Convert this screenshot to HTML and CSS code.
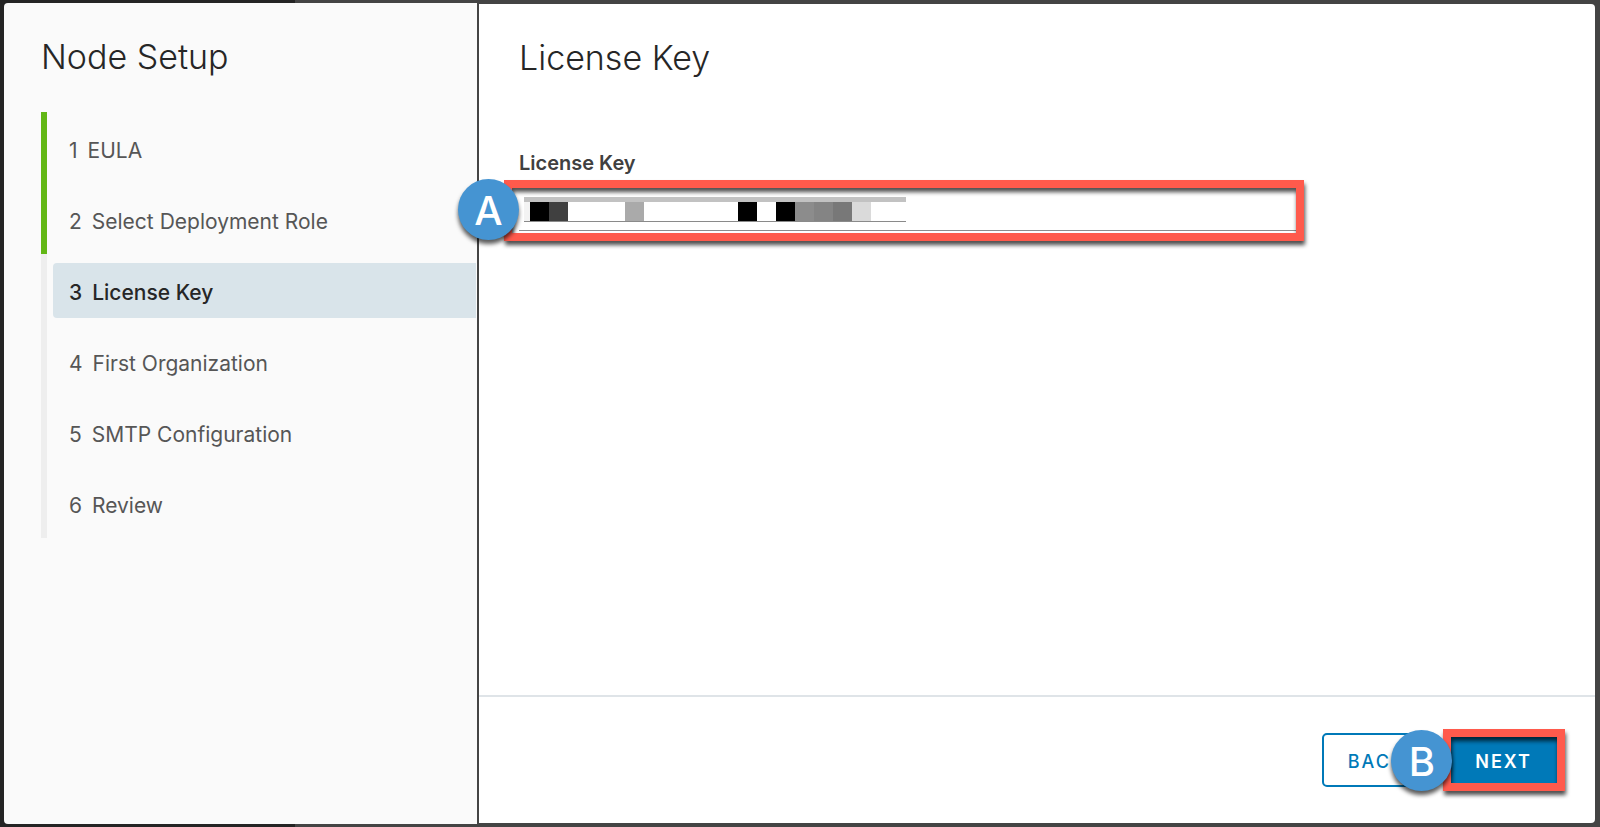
FILE: index.html
```html
<!DOCTYPE html>
<html lang="en">
<head>
  <meta charset="UTF-8" />
  <meta name="viewport" content="width=device-width, initial-scale=1.0"/>
  <title>Node Setup</title>
  <link rel="stylesheet" href="styles.css">
</head>
<body>
  <div class="wizard">
    <aside class="sidebar">
      <h1>Node Setup</h1>
      <ol class="steps">
        <li class="done"><a href="#eula"><span>1</span><span>EULA</span></a></li>
        <li class="done"><a href="#role"><span>2</span><span>Select Deployment Role</span></a></li>
        <li class="current"><a href="#license" aria-current="step"><span>3</span><span>License Key</span></a></li>
        <li><a href="#organization"><span>4</span><span>First Organization</span></a></li>
        <li><a href="#smtp"><span>5</span><span>SMTP Configuration</span></a></li>
        <li><a href="#review"><span>6</span><span>Review</span></a></li>
      </ol>
    </aside>

    <main class="page">
      <div class="page-body">
        <h2>License Key</h2>
        <form class="field">
          <label for="license-key">License Key</label>
          <div class="input-wrap">
            <input type="text" id="license-key" autocomplete="off">
            <!-- masked key value -->
            <svg class="mask" width="382" height="25" viewBox="0 0 382 25" shape-rendering="crispEdges" aria-hidden="true">
              <rect width="382" height="5" fill="#c2c2c2"/>
              <rect y="5" width="6" height="19" fill="#f3f3f3"/>
              <rect x="6" y="5" width="19" height="19" fill="#000"/>
              <rect x="25" y="5" width="19" height="19" fill="#404040"/>
              <rect x="101" y="5" width="19" height="19" fill="#aaa"/>
              <rect x="214" y="5" width="19" height="19" fill="#000"/>
              <rect x="252" y="5" width="19" height="19" fill="#000"/>
              <rect x="271" y="5" width="19" height="19" fill="#8c8c8c"/>
              <rect x="290" y="5" width="19" height="19" fill="#848484"/>
              <rect x="309" y="5" width="19" height="19" fill="#787878"/>
              <rect x="328" y="5" width="19" height="19" fill="#dadada"/>
              <rect y="24" width="382" height="1" fill="#8a8a8a"/>
            </svg>
            <span class="callout callout-input"></span>
            <span class="badge badge-a">A</span>
          </div>
        </form>
      </div>

      <footer class="actions">
        <button type="button" class="btn">BACK</button>
        <div class="next-wrap">
          <button type="button" class="btn btn-primary">NEXT</button>
          <span class="callout callout-next"></span>
          <span class="badge badge-b">B</span>
        </div>
      </footer>
    </main>
  </div>
</body>
</html>
```

FILE: styles.css
```css
* {
  margin: 0;
  padding: 0;
  box-sizing: border-box;
}

body {
  min-height: 100vh;
  display: flex;
  padding: 3px 5px 3px 4px;
  background: linear-gradient(90deg, #242424 295px, #444 295px);
  font-family: Inter, "Open Sans", sans-serif;
  color: #565656;
}

h1, h2 {
  font-size: 34px;
  font-weight: 300;
  line-height: 40px;
  color: #262626;
}

.wizard {
  flex: 1;
  display: flex;
  gap: 2px;
  background: linear-gradient(90deg, transparent 473px, #444 473px);
  border-radius: 4px;
}

/* sidebar */
.sidebar {
  flex: 0 0 473px;
  padding: 34px 1px 0 37px;
  background: #fafafa;
  border-radius: 4px 0 0 4px;
}

.steps {
  list-style: none;
  margin-top: 35px;
}

.steps li {
  padding: 9px 0 7px 6px;
  border-left: 6px solid #eee;
}

.steps li.done {
  border-left-color: #62b715;
}

.steps a {
  height: 55px;
  display: flex;
  align-items: center;
  gap: 10px;
  padding: 3px 0 0 16px;
  border-radius: 4px 0 0 4px;
  font-size: 21px;
  color: #565656;
  text-decoration: none;
}

.steps .current a {
  background: #d9e4ea;
  color: #262626;
  font-weight: 500;
}

/* page */
.page {
  flex: 1;
  display: flex;
  flex-direction: column;
  margin: 1px 0;
  background: #fff;
  border-radius: 0 4px 4px 0;
}

.page-body {
  flex: 1;
  padding: 34px 40px 0;
}

.field {
  width: 75%;
  margin-top: 71px;
}

.field label {
  display: block;
  font-size: 20px;
  font-weight: 600;
  line-height: 28px;
  color: #404040;
}

.input-wrap {
  position: relative;
  margin-top: 11px;
}

.input-wrap input {
  display: block;
  width: 100%;
  height: 43px;
  border: none;
  border-bottom: 1px solid #8c8c8c;
  background: #fff;
  font: inherit;
  font-size: 20px;
}

.mask {
  position: absolute;
  top: 9px;
  left: 5px;
}

/* callouts */
.callout {
  position: absolute;
  border: 8px solid #ff5a4c;
  filter: drop-shadow(1px 4px 2px rgba(0, 0, 0, 0.7));
  pointer-events: none;
}

.callout-input {
  top: -8px;
  right: -8px;
  bottom: -10px;
  left: -15px;
}

.callout-next {
  top: -4px;
  right: -7px;
  bottom: -4px;
  left: -6px;
}

.badge {
  position: absolute;
  width: 61px;
  height: 61px;
  border-radius: 50%;
  background: #4594d2;
  box-shadow: 0 4px 4px rgba(0, 0, 0, 0.65);
  color: #fff;
  font-size: 40px;
  font-weight: 500;
  line-height: 63px;
  text-align: center;
}

.badge-a {
  top: -9px;
  left: -61px;
}

.badge-b {
  top: -3px;
  left: -58px;
}

/* footer buttons */
.actions {
  display: flex;
  justify-content: flex-end;
  gap: 18px;
  padding: 36px 37px;
  border-top: 2px solid #dfe4e8;
}

.next-wrap {
  position: relative;
}

.btn {
  min-width: 108px;
  height: 54px;
  padding: 2px 24px 0;
  border: 2px solid #0079b8;
  border-radius: 5px;
  background: #fff;
  color: #0079b8;
  font-family: inherit;
  font-size: 18px;
  font-weight: 500;
  letter-spacing: 2px;
  cursor: pointer;
}

.btn-primary {
  background: #0079b8;
  color: #fff;
  font-weight: 600;
}
```
